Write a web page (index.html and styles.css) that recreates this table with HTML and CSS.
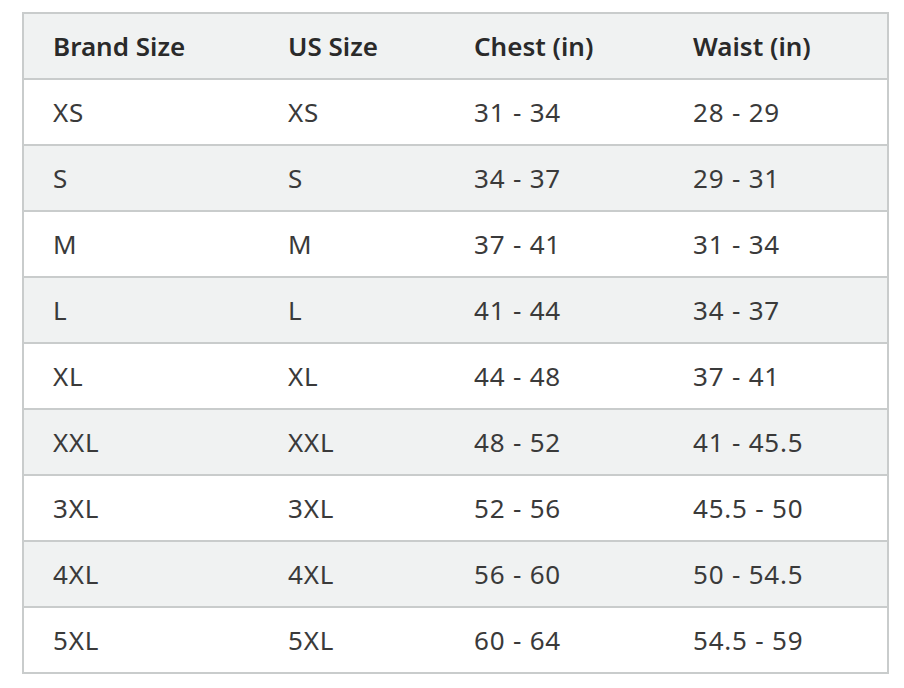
FILE: index.html
```html
<!DOCTYPE html>
<html>
<head>
<meta charset="utf-8">
<link rel="stylesheet" href="styles.css">
</head>
<body>
<table class="size-table">
  <colgroup>
    <col class="c1"><col class="c2"><col class="c3"><col class="c4">
  </colgroup>
  <thead>
    <tr><th>Brand Size</th><th>US Size</th><th>Chest (in)</th><th>Waist (in)</th></tr>
  </thead>
  <tbody>
    <tr><td>XS</td><td>XS</td><td>31 - 34</td><td>28 - 29</td></tr>
    <tr><td>S</td><td>S</td><td>34 - 37</td><td>29 - 31</td></tr>
    <tr><td>M</td><td>M</td><td>37 - 41</td><td>31 - 34</td></tr>
    <tr><td>L</td><td>L</td><td>41 - 44</td><td>34 - 37</td></tr>
    <tr><td>XL</td><td>XL</td><td>44 - 48</td><td>37 - 41</td></tr>
    <tr><td>XXL</td><td>XXL</td><td>48 - 52</td><td>41 - 45.5</td></tr>
    <tr><td>3XL</td><td>3XL</td><td>52 - 56</td><td>45.5 - 50</td></tr>
    <tr><td>4XL</td><td>4XL</td><td>56 - 60</td><td>50 - 54.5</td></tr>
    <tr><td>5XL</td><td>5XL</td><td>60 - 64</td><td>54.5 - 59</td></tr>
  </tbody>
</table>
</body>
</html>
```
FILE: styles.css
```css
html, body {
  margin: 0;
  padding: 0;
  background: #ffffff;
}
body {
  font-family: "Noto Sans", "Open Sans", sans-serif;
  color: #333333;
}
.size-table {
  margin: 12px 0 0 22px;
  width: 865px;
  border-collapse: collapse;
  table-layout: fixed;
  border: 2px solid #c9cccc;
}
.c1 { width: 236px; }
.c2 { width: 186px; }
.c3 { width: 219px; }
.c4 { width: 224px; }
.size-table th,
.size-table td {
  height: 66px;
  padding: 0 0 0 29px;
  text-align: left;
  vertical-align: middle;
  font-size: 26px;
  border-top: 2px solid #c9cccc;
  white-space: nowrap;
  box-sizing: border-box;
}
.size-table th {
  font-weight: 600;
  color: #2a2a2a;
  background: #f0f2f2;
}
.size-table td {
  font-weight: 400;
  color: #3a3a3a;
  letter-spacing: 0.8px;
}
.size-table tbody tr:nth-child(even) td {
  background: #f0f2f2;
}
```
